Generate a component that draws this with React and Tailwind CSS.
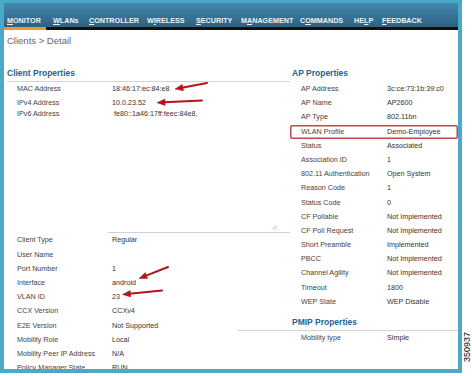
import React from "react";

const menu = [
  { pre: "", u: "M", post: "ONITOR", w: "w-[49px] pl-[3px]" },
  { pre: "", u: "W", post: "LANs", w: "w-[36px]" },
  { pre: "", u: "C", post: "ONTROLLER", w: "w-[58px]" },
  { pre: "W", u: "I", post: "RELESS", w: "w-[49px]" },
  { pre: "", u: "S", post: "ECURITY", w: "w-[45px]" },
  { pre: "M", u: "A", post: "NAGEMENT", w: "w-[59px]" },
  { pre: "C", u: "O", post: "MMANDS", w: "w-[54px]" },
  { pre: "HE", u: "L", post: "P", w: "w-[28px]" },
  { pre: "", u: "F", post: "EEDBACK", w: "w-[60px]" },
];

const apRows = [
  ["AP Address", "3c:ce:73:1b:39:c0"],
  ["AP Name", "AP2600"],
  ["AP Type", "802.11bn"],
  ["WLAN Profile", "Demo-Employee", true],
  ["Status", "Associated"],
  ["Association ID", "1"],
  ["802.11 Authentication", "Open System"],
  ["Reason Code", "1"],
  ["Status Code", "0"],
  ["CF Pollable", "Not Implemented"],
  ["CF Poll Request", "Not Implemented"],
  ["Short Preamble", "Implemented"],
  ["PBCC", "Not Implemented"],
  ["Channel Agility", "Not Implemented"],
  ["Timeout", "1800"],
  ["WEP State", "WEP Disable"],
];

const clientRows = [
  ["Client Type", "Regular"],
  ["User Name", ""],
  ["Port Number", "1"],
  ["Interface", "android"],
  ["VLAN ID", "23"],
  ["CCX Version", "CCXv4"],
  ["E2E Version", "Not Supported"],
  ["Mobility Role", "Local"],
  ["Mobility Peer IP Address", "N/A"],
  ["Policy Manager State", "RUN"],
];

const Row = ({ label, value, lw = "w-[95px]" }) => (
  <div className="flex h-[14.2px] leading-[14.2px] whitespace-nowrap">
    <span className={`${lw} shrink-0 text-[#444]`}>{label}</span>
    <span className="text-[#333]">{value}</span>
  </div>
);

const Arrow = ({ x1, y1, x2, y2 }) => {
  const dx = x2 - x1;
  const dy = y2 - y1;
  const len = Math.sqrt(dx * dx + dy * dy);
  const ux = dx / len;
  const uy = dy / len;
  const bx = x2 - ux * 8;
  const by = y2 - uy * 8;
  const nx = -uy * 3.2;
  const ny = ux * 3.2;
  return (
    <g fill="#b3151c" stroke="#b3151c">
      <line x1={x1} y1={y1} x2={bx + ux} y2={by + uy} strokeWidth="2" strokeLinecap="round" />
      <polygon
        points={`${x2},${y2} ${bx + nx},${by + ny} ${bx - nx},${by - ny}`}
        strokeWidth="0.5"
      />
    </g>
  );
};

const App = () => {
  return (
    <div
      className="relative flex w-[472px] h-[376px] bg-white overflow-hidden text-[7.2px]"
      style={{ fontFamily: '"Liberation Sans", Arial, sans-serif' }}
    >
      <div className="w-[462px] h-[373px] bg-[#4aa9c8] pl-[4px] pr-[4px] pt-[3px] pb-[4px] shrink-0">
        <div className="w-full h-full bg-white overflow-hidden">
          {/* top menu */}
          <div className="h-[24px] bg-gradient-to-b from-[#4488ad] to-[#2c6283] flex items-end pb-[2px]">
            {menu.map((m) => (
              <div
                key={m.post}
                className={`${m.w} shrink-0 text-[7.2px] leading-[8px] font-bold text-[#eef3f6] whitespace-nowrap`}
              >
                {m.pre}
                <u className="underline-offset-[1px]">{m.u}</u>
                {m.post}
              </div>
            ))}
          </div>
          <div className="flex h-[3px]">
            <div className="w-[42px] bg-[#f0962a]"></div>
            <div className="flex-1 bg-[#111]"></div>
          </div>

          <div className="pl-[3px] pt-[5px] text-[9.5px] leading-[12px] text-[#666]">
            Clients &gt; Detail
          </div>

          <div className="flex mt-[21px] pl-[3px]">
            {/* client properties */}
            <div className="w-[283px] shrink-0">
              <div className="h-[14px] border-b border-[#d4d4d4] text-[8.5px] leading-[10px] font-bold text-[#2a5f8a]">
                Client Properties
              </div>
              <div className="pl-[10px]">
                <Row label="MAC Address" value="18:46:17:ec:84:e8" />
                <Row label="IPv4 Address" value="10.0.23.52" />
                <div className="flex h-[123px]">
                  <span className="w-[91px] shrink-0 leading-[8px] text-[#444]">IPv6 Address</span>
                  <div className="relative w-[182px] shrink-0 border-b border-[#d0d0d0] pl-[6px] leading-[8px] text-[#333]">
                    fe80::1a46:17ff:feec:84e8,
                    <svg
                      className="absolute right-[13px] bottom-[2px]"
                      width="6"
                      height="6"
                      viewBox="0 0 6 6"
                    >
                      <path d="M5.5 1 L1 5.5 M5.5 3.5 L3.5 5.5" stroke="#aaa" strokeWidth="0.8" />
                    </svg>
                  </div>
                </div>
                {clientRows.map(([l, v]) => (
                  <Row key={l} label={l} value={v} />
                ))}
              </div>
            </div>

            {/* ap properties */}
            <div className="w-[168px] shrink-0">
              <div className="h-[14px] pl-[2px] text-[8.5px] leading-[10px] font-bold text-[#2a5f8a]">
                AP Properties
              </div>
              {apRows.map(([l, v, box]) => (
                <div
                  key={l}
                  className={`pl-[11px] ${box ? "rounded-[2px] shadow-[inset_0_0_0_1.5px_#c4464a]" : ""}`}
                >
                  <Row label={l} value={v} lw="w-[86px]" />
                </div>
              ))}
              <div className="-ml-[52px] pl-[54px] pt-[8px] h-[22px] border-b border-[#d4d4d4] text-[8.5px] leading-[10px] font-bold text-[#2a5f8a]">
                PMIP Properties
              </div>
              <div className="pl-[11px]">
                <Row label="Mobility type" value="Simple" lw="w-[86px]" />
              </div>
            </div>
          </div>
        </div>
      </div>

      <div className="w-[10px] flex flex-col justify-end pb-[14px]">
        <span className="[writing-mode:vertical-rl] rotate-180 text-[9px] leading-[10px] text-black">
          350937
        </span>
      </div>

      <svg className="absolute inset-0 pointer-events-none" width="472" height="376">
        <Arrow x1={207} y1={83} x2={175} y2={89} />
        <Arrow x1={202} y1={100.5} x2={157} y2={102.7} />
        <Arrow x1={168} y1={267} x2={139} y2={278.5} />
        <Arrow x1={162} y1={290.5} x2={122.5} y2={294.5} />
      </svg>
    </div>
  );
};

export default App;
